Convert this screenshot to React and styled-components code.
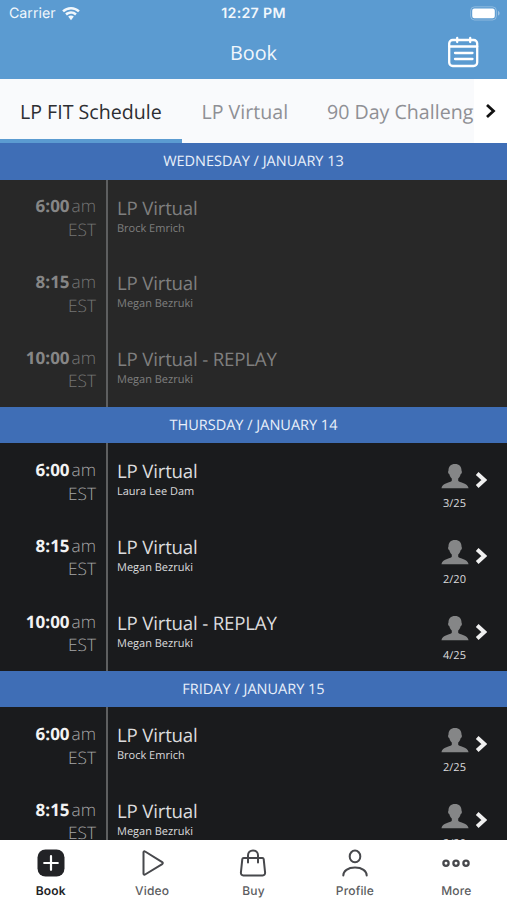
import React from 'react';
import styled, { createGlobalStyle, ThemeProvider } from 'styled-components';

const theme = {
  colors: {
    sky: '#5b9bd1',
    blue: '#3f6eb6',
    dark: '#1a1b1d',
    past: '#282828',
    line: '#5e5f60',
    icon: '#47484c',
  },
  fonts: {
    body: `'Open Sans', sans-serif`,
    system: `Inter, sans-serif`,
  },
};

const GlobalStyle = createGlobalStyle`
  * {
    box-sizing: border-box;
  }
  body {
    margin: 0;
    background: #1a1b1d;
    text-rendering: geometricPrecision;
  }
`;

const Screen = styled.div`
  display: flex;
  flex-direction: column;
  width: 507px;
  height: 900px;
  overflow: hidden;
  background: ${props => props.theme.colors.dark};
  font-family: ${props => props.theme.fonts.body};
`;

const Header = styled.header`
  flex: none;
  height: 79px;
  background: ${props => props.theme.colors.sky};
  color: #f1f7fc;
`;

const StatusBar = styled.div`
  display: grid;
  grid-template-columns: 1fr auto 1fr;
  align-items: center;
  height: 27px;
  padding: 0 7px 0 9px;
  font-family: ${props => props.theme.fonts.system};
  font-size: 14.2px;
  .carrier {
    display: flex;
    align-items: center;
    gap: 6px;
  }
  .clock {
    margin-right: 2px;
    font-weight: 600;
    font-size: 14.2px;
    letter-spacing: 0.3px;
  }
  .battery {
    justify-self: end;
    display: block;
  }
`;

const TitleBar = styled.div`
  display: grid;
  grid-template-columns: 1fr auto 1fr;
  align-items: center;
  height: 50px;
  padding: 0 28px;
  h1 {
    margin: 0;
    font-size: 19.8px;
    font-weight: 400;
  }
  svg {
    justify-self: end;
  }
`;

const Tabs = styled.nav`
  flex: none;
  display: flex;
  height: 64px;
  background: #f9fafc;
`;

const Tab = styled.div`
  flex: none;
  width: ${props => props.$width}px;
  padding-left: 20px;
  line-height: 66px;
  font-size: 19.6px;
  white-space: nowrap;
  overflow: hidden;
  color: ${props => (props.$active ? '#2d2e32' : '#8f9095')};
  border-bottom: ${props =>
    props.$active ? `4px solid ${props.theme.colors.sky}` : 'none'};
`;

const TabsArrow = styled.div`
  flex: 1;
  display: flex;
  align-items: center;
  padding-left: 11px;
  background: #fff;
`;

const Schedule = styled.main`
  flex: 1;
  min-height: 0;
  overflow: hidden;
`;

const DayTitle = styled.h2`
  height: 36.5px;
  margin: 0;
  background: ${props => props.theme.colors.blue};
  color: #e9f0fa;
  font-size: 14.5px;
  font-weight: 400;
  line-height: 37.5px;
  text-align: center;
`;

const Row = styled.div`
  display: flex;
  height: 75.8px;
  background: ${props =>
    props.$past ? props.theme.colors.past : props.theme.colors.dark};
  color: ${props => (props.$past ? '#7f7f7f' : '#dcdcdd')};
`;

const Time = styled.div`
  width: 108px;
  padding: 14.8px 10px 0 0;
  border-right: 2px solid ${props => props.theme.colors.line};
  text-align: right;
  font-size: 17.3px;
  font-weight: 300;
  line-height: 23.5px;
  color: ${props => (props.$past ? '#757575' : '#a6a6a7')};
  b {
    margin-right: 2px;
    font-size: 17px;
    font-weight: 700;
    color: ${props => (props.$past ? '#868686' : '#f2f2f2')};
  }
`;

const Details = styled.div`
  flex: 1;
  padding: 15px 0 0 9px;
  .name {
    font-size: 18.7px;
    line-height: 27px;
    letter-spacing: -0.2px;
  }
  .coach {
    font-size: 11px;
    line-height: 13px;
  }
`;

const Spots = styled.div`
  width: 28px;
  margin-right: 6px;
  padding-top: 21px;
  font-size: 11px;
  line-height: 17px;
  text-align: center;
  white-space: nowrap;
  svg {
    display: block;
    margin-bottom: 6px;
  }
`;

const RowArrow = styled.div`
  width: 32.5px;
  padding-top: 28px;
  svg {
    display: block;
  }
`;

const TabBar = styled.footer`
  flex: none;
  display: grid;
  grid-template-columns: repeat(5, 1fr);
  height: 60px;
  background: #fff;
`;

const TabBarItem = styled.div`
  display: flex;
  flex-direction: column;
  align-items: center;
  padding-top: 9px;
  gap: 5px;
  font-family: ${props => props.theme.fonts.system};
  font-size: 12px;
  font-weight: ${props => (props.$active ? 600 : 500)};
  line-height: 18px;
  letter-spacing: 0.15px;
  color: ${props => (props.$active ? '#222326' : '#5b5c60')};
  svg {
    color: ${props => props.theme.colors.icon};
  }
`;

const WifiIcon = () => (
  <svg width="18" height="14" viewBox="0 0 18 14" fill="currentColor">
    <path d="M9 0C5.600 0 2.500 1.300 .2 3.500l1.700 1.800A10.200 10.200 0 0 1 9 2.500c2.800 0 5.300 1.100 7.100 2.800l1.700-1.800A12.800 12.800 0 0 0 9 0z" />
    <path d="M9 4.300c-2.200 0-4.300.9-5.800 2.300l1.700 1.800A5.900 5.900 0 0 1 9 6.800c1.600 0 3 .6 4.100 1.600l1.700-1.800A8.400 8.400 0 0 0 9 4.300z" />
    <path d="M9 8.500c-1.100 0-2 .4-2.800 1.100L9 13.200l2.800-3.600A4.200 4.200 0 0 0 9 8.500z" />
  </svg>
);

const BatteryIcon = () => (
  <svg className="battery" width="30" height="15" viewBox="0 0 30 15" fill="none">
    <rect x=".6" y=".8" width="25.800" height="13.200" rx="4" stroke="#fff" strokeOpacity=".3" />
    <rect x="2.200" y="2.500" width="22.600" height="9.800" rx="2.200" fill="#fff" />
    <path d="M28 5v4.600c1-.4 1.600-1.200 1.600-2.300S29 5.400 28 5z" fill="#fff" fillOpacity=".4" />
  </svg>
);

const CalendarIcon = () => (
  <svg width="32" height="32" viewBox="0 0 32 32" fill="none" stroke="#fff" strokeWidth="2.300" strokeLinecap="round">
    <rect x="2.200" y="4" width="28" height="26" rx="3.500" />
    <path d="M2.200 10.500h28M10.200 2v4M23.200 2v4M8 17h17.500M8 23h17.500" />
  </svg>
);

const ChevronIcon = ({ width, height, stroke, strokeWidth }) => (
  <svg width={width} height={height} viewBox="0 0 11 16" fill="none" stroke={stroke} strokeWidth={strokeWidth}>
    <path d="M2 2l6.500 6L2 14" />
  </svg>
);

const PersonIcon = () => (
  <svg width="28" height="25" viewBox="0 0 28 25" fill="#858687">
    <path d="M14 0c4.300 0 6.500 2.700 6.500 6.300 0 .7.500 1 .4 1.900-.1 1-.7 1.600-1.300 2.100-.5 2-1.300 3.300-2.400 4.300v2.100c1 2 9.800 2.300 10.300 7.300v.3H.5V24c.5-5 9.300-5.300 10.300-7.300v-2.100c-1.100-1-1.900-2.300-2.400-4.300-.6-.5-1.200-1.100-1.300-2.100-.1-.9.400-1.200.4-1.900C7.500 2.700 9.700 0 14 0z" />
  </svg>
);

const BookIcon = () => (
  <svg width="28" height="28" viewBox="0 0 28 28" fill="none">
    <rect x=".5" y=".5" width="27" height="27" rx="8" fill="#222326" />
    <path d="M14 7.200v13.600M7.200 14h13.600" stroke="#fff" strokeWidth="2.200" strokeLinecap="round" />
  </svg>
);

const lineIcon = {
  width: 28,
  height: 28,
  viewBox: '0 0 28 28',
  fill: 'none',
  stroke: 'currentColor',
  strokeWidth: 2,
  strokeLinecap: 'round',
  strokeLinejoin: 'round',
};

const VideoIcon = () => (
  <svg {...lineIcon}>
    <path d="M5.500 3.300v21.400c0 .9.900 1.300 1.600.8l17.100-10.400c.8-.5.8-1.500 0-2L7.100 2.500C6.400 2 5.500 2.400 5.500 3.300z" />
  </svg>
);

const BuyIcon = () => (
  <svg {...lineIcon}>
    <path d="M4.600 9h18.800c.7 0 1.200.5 1.300 1.100l1.400 13.500c.1 1.700-.8 2.800-2.400 2.800H4.300c-1.600 0-2.500-1.100-2.400-2.800l1.400-13.500C3.400 9.500 3.900 9 4.600 9z" />
    <path d="M9 13.500V6.200C9 3.400 11.200 1.400 14 1.400s5 2 5 4.800v7.300" />
  </svg>
);

const ProfileIcon = () => (
  <svg {...lineIcon}>
    <ellipse cx="14" cy="7.400" rx="5.300" ry="5.900" />
    <path d="M2.300 26.500c0-4.500 4.500-8 11.700-8s11.700 3.500 11.700 8" />
  </svg>
);

const MoreIcon = () => (
  <svg {...lineIcon} strokeWidth="2.300">
    <circle cx="4" cy="14.300" r="2.600" />
    <circle cx="14" cy="14.300" r="2.600" />
    <circle cx="24" cy="14.300" r="2.600" />
  </svg>
);

const tabs = [
  { label: 'LP FIT Schedule', width: 181.5, active: true },
  { label: 'LP Virtual', width: 125.5 },
  { label: '90 Day Challeng', width: 167 },
];

const days = [
  {
    title: 'WEDNESDAY / JANUARY 13',
    past: true,
    classes: [
      { time: '6:00', name: 'LP Virtual', coach: 'Brock Emrich' },
      { time: '8:15', name: 'LP Virtual', coach: 'Megan Bezruki' },
      { time: '10:00', name: 'LP Virtual - REPLAY', coach: 'Megan Bezruki' },
    ],
  },
  {
    title: 'THURSDAY / JANUARY 14',
    classes: [
      { time: '6:00', name: 'LP Virtual', coach: 'Laura Lee Dam', spots: '3/25' },
      { time: '8:15', name: 'LP Virtual', coach: 'Megan Bezruki', spots: '2/20' },
      { time: '10:00', name: 'LP Virtual - REPLAY', coach: 'Megan Bezruki', spots: '4/25' },
    ],
  },
  {
    title: 'FRIDAY / JANUARY 15',
    classes: [
      { time: '6:00', name: 'LP Virtual', coach: 'Brock Emrich', spots: '2/25' },
      { time: '8:15', name: 'LP Virtual', coach: 'Megan Bezruki', spots: '2/20' },
    ],
  },
];

const menu = [
  { label: 'Book', Icon: BookIcon, active: true },
  { label: 'Video', Icon: VideoIcon },
  { label: 'Buy', Icon: BuyIcon },
  { label: 'Profile', Icon: ProfileIcon },
  { label: 'More', Icon: MoreIcon },
];

const ClassRow = ({ time, name, coach, spots, past }) => (
  <Row $past={past}>
    <Time $past={past}>
      <b>{time}</b>am
      <br />
      EST
    </Time>
    <Details>
      <div className="name">{name}</div>
      <div className="coach">{coach}</div>
    </Details>
    {spots && (
      <>
        <Spots>
          <PersonIcon />
          {spots}
        </Spots>
        <RowArrow>
          <ChevronIcon width="12" height="18" stroke="#f0f0f0" strokeWidth="3.600" />
        </RowArrow>
      </>
    )}
  </Row>
);

export default class App extends React.Component {
  render() {
    return (
      <ThemeProvider theme={theme}>
        <GlobalStyle />
        <Screen>
          <Header>
            <StatusBar>
              <div className="carrier">
                Carrier <WifiIcon />
              </div>
              <div className="clock">12:27 PM</div>
              <BatteryIcon />
            </StatusBar>
            <TitleBar>
              <span />
              <h1>Book</h1>
              <CalendarIcon />
            </TitleBar>
          </Header>
          <Tabs>
            {tabs.map(({ label, width, active }) => (
              <Tab key={label} $width={width} $active={active}>
                {label}
              </Tab>
            ))}
            <TabsArrow>
              <ChevronIcon width="11" height="16" stroke="#111" strokeWidth="2.800" />
            </TabsArrow>
          </Tabs>
          <Schedule>
            {days.map(({ title, past, classes }) => (
              <section key={title}>
                <DayTitle>{title}</DayTitle>
                {classes.map(item => (
                  <ClassRow key={item.time} past={past} {...item} />
                ))}
              </section>
            ))}
          </Schedule>
          <TabBar>
            {menu.map(({ label, Icon, active }) => (
              <TabBarItem key={label} $active={active}>
                <Icon />
                {label}
              </TabBarItem>
            ))}
          </TabBar>
        </Screen>
      </ThemeProvider>
    );
  }
}
